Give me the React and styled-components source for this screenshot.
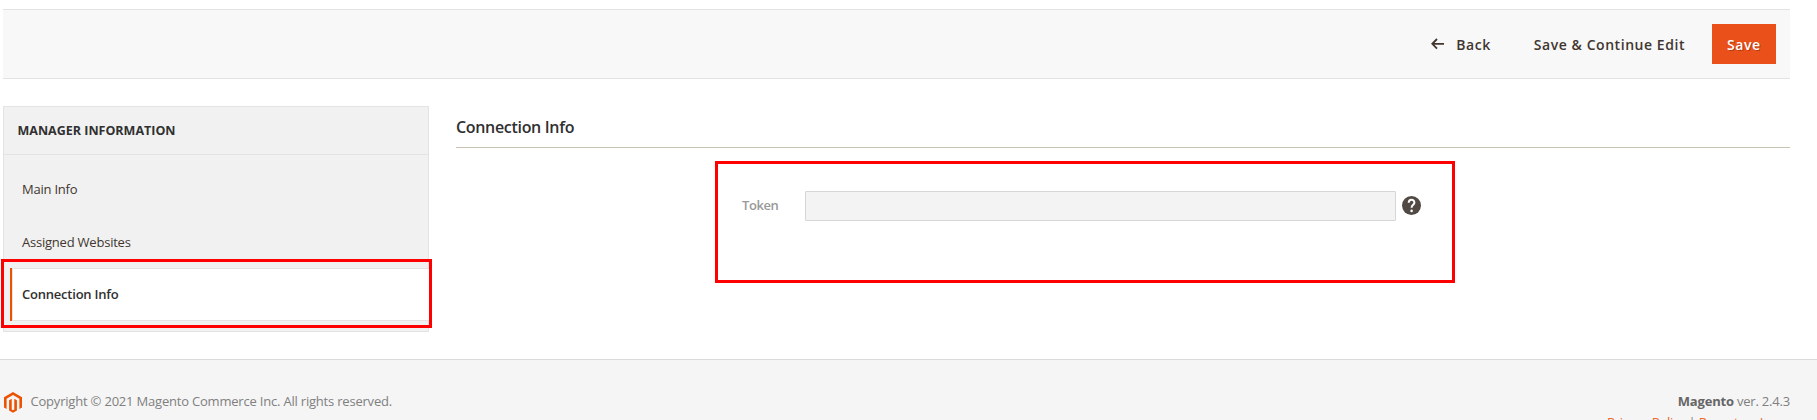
import React from "react";
import styled, { createGlobalStyle, css } from "styled-components";

const GlobalStyle = createGlobalStyle`
  * { box-sizing: border-box; }
  html, body { margin: 0; height: 420px; overflow: hidden; background: #fff; }
  body { font-family: "Open Sans", "Noto Sans", sans-serif; font-size: 14px; color: #41362f; }
`;

const Page = styled.div`
  height: 420px;
  overflow: hidden;
  display: flex;
  flex-direction: column;
`;

const Toolbar = styled.header`
  flex: none;
  height: 70px;
  margin: 9px 27px 27px 3px;
  padding-right: 14px;
  display: flex;
  align-items: center;
  justify-content: flex-end;
  background: #f8f8f8;
  border-top: 1px solid #e3e3e3;
  border-bottom: 1px solid #e3e3e3;
`;

const Button = styled.button`
  height: 40px;
  padding: 1px 0 0;
  margin-right: ${(p) => p.$gap || 0}px;
  display: flex;
  align-items: center;
  border: 0;
  background: transparent;
  color: #41362f;
  font: 600 14px/20px "Open Sans", "Noto Sans", sans-serif;
  letter-spacing: 0.55px;
  white-space: nowrap;
  svg { margin: -1px 12px 0 0; }
  ${(p) =>
    p.$primary &&
    css`
      width: 64px;
      padding-left: 15px;
      background: #ea501a;
      color: #fff;
      text-shadow: 1px 1px 0 rgba(0, 0, 0, 0.25);
    `}
`;

const Columns = styled.main`
  flex: none;
  height: 253px;
  margin: 0 27px 0 3px;
  display: flex;
  gap: 27px;
`;

const Sidebar = styled.nav`
  position: relative;
  width: 426px;
  height: 226px;
  background: #f1f1f1;
  border: 1px solid #e3e3e3;
`;

const SidebarTitle = styled.div`
  height: 48px;
  padding: 0 14px 0 13.5px;
  border-bottom: 1px solid #e3e3e3;
  color: #303030;
  font-size: 12.5px;
  font-weight: 700;
  line-height: 47px;
`;

const NavList = styled.ul`
  list-style: none;
  margin: 0;
  padding: 7px 0 0 6px;
`;

const NavItem = styled.li`
  height: 53px;
  padding-left: 12px;
  font-size: 13px;
  letter-spacing: -0.22px;
  line-height: 54px;
  ${(p) =>
    p.$active &&
    css`
      margin-right: -1px;
      padding-left: 10px;
      border-left: 2px solid #eb5202;
      background: #fff;
      box-shadow: inset 0 1px #e3e3e3, inset 0 -1px #e3e3e3, inset 1px 0 #e3e3e3;
      color: #303030;
      font-weight: 600;
      line-height: 53px;
    `}
`;

const NavHighlight = styled.div`
  position: absolute;
  left: -3px;
  top: 152px;
  width: 431px;
  height: 69px;
  border: 3px solid #f00;
`;

const Content = styled.section`
  flex: 1;
`;

const Heading = styled.h2`
  height: 42px;
  margin: 0 0 13px;
  border-bottom: 1px solid #cac3b4;
  color: #303030;
  font-size: 16px;
  font-weight: 600;
  letter-spacing: -0.32px;
  line-height: 43px;
`;

const FieldPanel = styled.div`
  width: 740px;
  height: 122px;
  margin-left: 259px;
  padding: 27px 0 0 24px;
  display: flex;
  align-items: flex-start;
  border: 3px solid #f00;
`;

const Label = styled.label`
  width: 63px;
  color: #999;
  font-size: 13px;
  font-weight: 600;
  letter-spacing: -0.4px;
  line-height: 28px;
`;

const TextField = styled.input`
  width: 591px;
  height: 30px;
  border: 1px solid #d6d6d6;
  border-radius: 1px;
  background: #f3f3f3;
`;

const Help = styled.span`
  width: 19px;
  height: 19px;
  margin: 5px 0 0 6px;
  svg { display: block; }
`;

const Footer = styled.footer`
  flex: 1;
  padding: 31px 27px 0 3px;
  display: flex;
  justify-content: space-between;
  align-items: flex-start;
  background: #f5f5f5;
  border-top: 1px solid #dadada;
  color: #808080;
  font-size: 13px;
  letter-spacing: -0.2px;
  line-height: 20px;
  white-space: nowrap;
`;

const Copyright = styled.div`
  display: flex;
  svg { margin: 1px 7.5px 0 0; }
`;

const Legal = styled.div`
  display: flex;
  flex-direction: column;
  align-items: flex-end;
  gap: 1px;
  strong { color: #666; font-weight: 700; }
`;

const Links = styled.div`
  a { color: #ef672f; }
`;

export default function App() {
  return (
    <>
      <GlobalStyle />
      <Page>
        <Toolbar>
          <Button $gap={43}>
            <svg width="13" height="12" viewBox="0 0 13 12" fill="none" stroke="#41362f" strokeWidth="1.8">
              <path d="M6 1 L1.3 5.8 L6 10.6 M1.5 5.8 H13" />
            </svg>
            Back
          </Button>
          <Button $gap={27}>Save &amp; Continue Edit</Button>
          <Button $primary>Save</Button>
        </Toolbar>
        <Columns>
          <Sidebar>
            <SidebarTitle>MANAGER INFORMATION</SidebarTitle>
            <NavList>
              <NavItem>Main Info</NavItem>
              <NavItem>Assigned Websites</NavItem>
              <NavItem $active>Connection Info</NavItem>
            </NavList>
            <NavHighlight />
          </Sidebar>
          <Content>
            <Heading>Connection Info</Heading>
            <FieldPanel>
              <Label htmlFor="token">Token</Label>
              <TextField id="token" disabled />
              <Help>
                <svg width="19" height="19" viewBox="0 0 19 19">
                  <circle cx="9.5" cy="9.5" r="9.5" fill="#514943" />
                  <path d="M6.7 6.7 C6.8 2.8 12.5 3 12.4 6.6 C12.3 8.8 9.6 8.9 9.6 11.7" fill="none" stroke="#fff" strokeWidth="2" />
                  <circle cx="9.6" cy="14.9" r="1.3" fill="#fff" />
                </svg>
              </Help>
            </FieldPanel>
          </Content>
        </Columns>
        <Footer>
          <Copyright>
            <svg width="20" height="21" viewBox="0 0 20 21" fill="#eb5202">
              <path d="M10 0 L19 5.2 V15.6 L16.4 17.1 V6.7 L10 3 L3.6 6.7 V17.1 L1 15.6 V5.2 Z" />
              <path d="M8.7 6.8 V17.4 L10 18.2 L11.3 17.4 V6.8 L13.9 8.3 V18.4 L10 20.7 L6.1 18.4 V8.3 Z" />
            </svg>
            Copyright © 2021 Magento Commerce Inc. All rights reserved.
          </Copyright>
          <Legal>
            <div><strong>Magento</strong> ver. 2.4.3</div>
            <Links><a>Privacy Policy</a> | <a>Report an Issue</a></Links>
          </Legal>
        </Footer>
      </Page>
    </>
  );
}
